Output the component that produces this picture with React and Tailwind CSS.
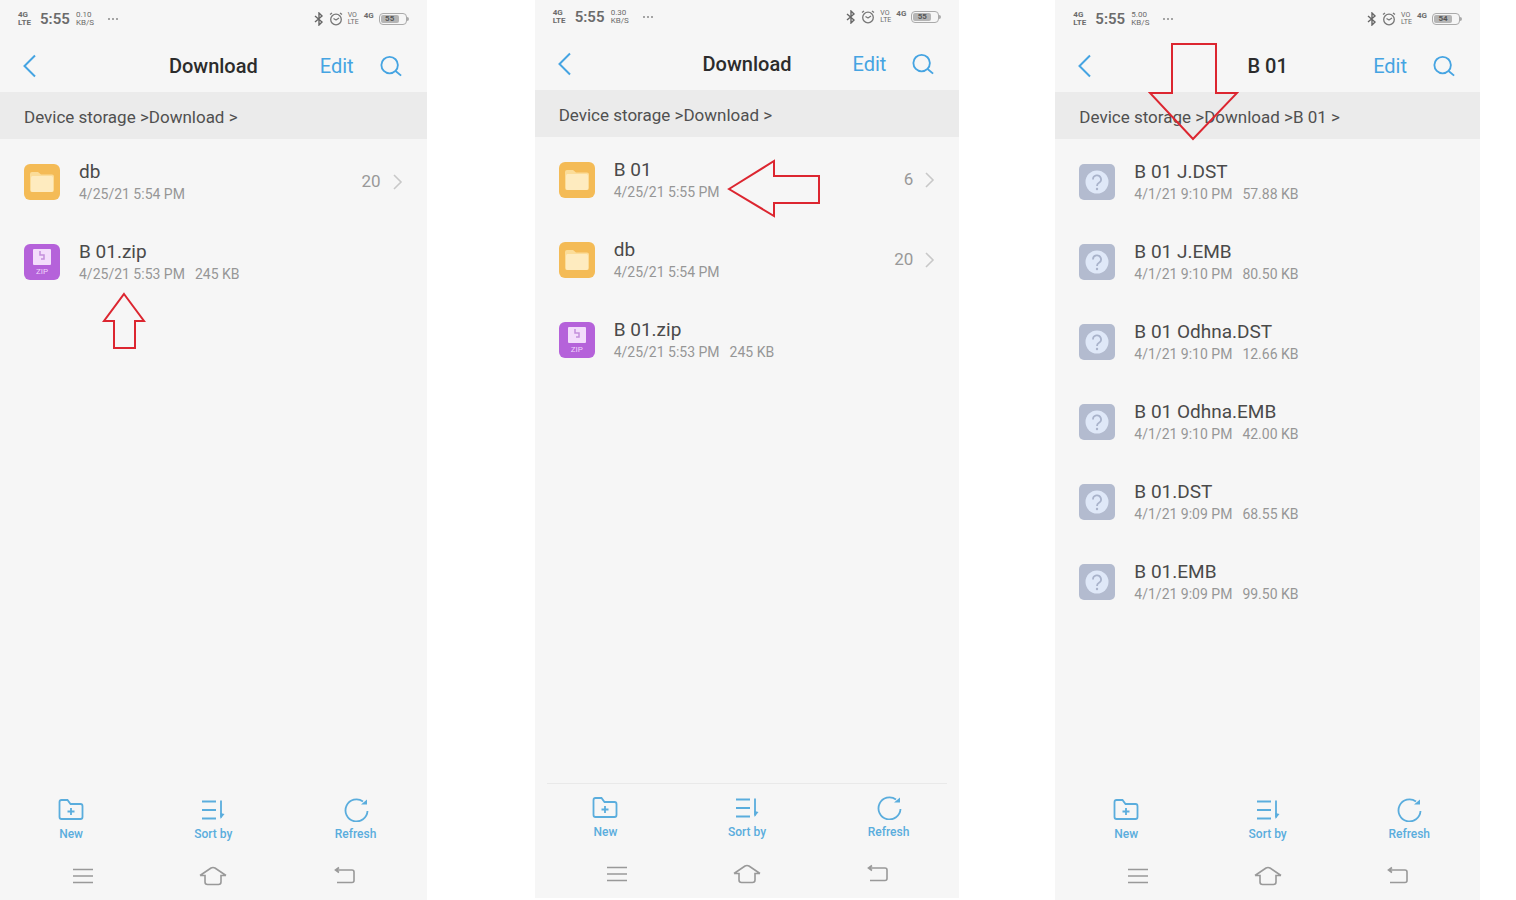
const zipRow = {
  name: "B 01.zip",
  type: "zip",
  date: "4/25/21 5:53 PM",
  size: "245 KB",
};

const screens = [
  {
    id: "download",
    title: "Download",
    path: ["Device storage", "Download"],
    speed: "0.10",
    battery: "55",
    arrow: "up",
    className: "flex-[427] pt-0.5",
    files: [
      { name: "db", type: "folder", date: "4/25/21 5:54 PM", count: 20 },
      zipRow,
    ],
  },
  {
    id: "extracted",
    title: "Download",
    path: ["Device storage", "Download"],
    speed: "0.30",
    battery: "55",
    arrow: "left",
    divider: true,
    className: "flex-[425] mb-0.5 ml-27",
    files: [
      { name: "B 01", type: "folder", date: "4/25/21 5:55 PM", count: 6 },
      { name: "db", type: "folder", date: "4/25/21 5:54 PM", count: 20 },
      zipRow,
    ],
  },
  {
    id: "b01",
    title: "B 01",
    path: ["Device storage", "Download", "B 01"],
    speed: "5.00",
    battery: "54",
    arrow: "down",
    className: "flex-[425] ml-24 pt-0.5",
    files: [
      { name: "B 01 J.DST", date: "4/1/21 9:10 PM", size: "57.88 KB" },
      { name: "B 01 J.EMB", date: "4/1/21 9:10 PM", size: "80.50 KB" },
      { name: "B 01 Odhna.DST", date: "4/1/21 9:10 PM", size: "12.66 KB" },
      { name: "B 01 Odhna.EMB", date: "4/1/21 9:10 PM", size: "42.00 KB" },
      { name: "B 01.DST", date: "4/1/21 9:09 PM", size: "68.55 KB" },
      { name: "B 01.EMB", date: "4/1/21 9:09 PM", size: "99.50 KB" },
    ],
  },
];

function StatusBar({ speed, battery }) {
  return (
    <div className="flex h-[34px] items-center px-[18px] text-[#6b6b6b]">
      <div className="w-[22px] text-[8px] leading-[8px] font-bold">
        <p>4G</p>
        <p>LTE</p>
      </div>
      <p className="w-9 text-[15px] font-semibold">5:55</p>
      <div className="text-[8px] leading-[8px]">
        <p>{speed}</p>
        <p>KB/S</p>
      </div>
      <svg className="ml-3 h-4 w-3.5" viewBox="0 0 14 16" fill="#8a8a8a">
        <circle cx="3" cy="8" r="1" />
        <circle cx="7" cy="8" r="1" />
        <circle cx="11" cy="8" r="1" />
      </svg>
      <div className="ml-auto flex items-center gap-[5px]">
        <svg
          className="h-3.5 w-2.5"
          viewBox="0 0 10 14"
          fill="none"
          stroke="#666"
          strokeWidth="1.4"
        >
          <path d="M1 4l7 6-3 3V1l3 3-7 6" />
        </svg>
        <svg
          className="h-3.5 w-3.5"
          viewBox="0 0 14 14"
          fill="none"
          stroke="#777"
          strokeWidth="1.3"
        >
          <circle cx="7" cy="7.5" r="5.3" />
          <path d="M7 8l3-2M7 8L4.5 6.5M1 2.5L3 1M13 2.5L11 1" />
        </svg>
        <div className="text-[7px] leading-[7px]">
          <p>VO</p>
          <p>LTE</p>
        </div>
        <p className="self-start text-[8px] leading-[8px] font-bold">4G</p>
        <div className="flex items-center">
          <div className="flex h-3 w-7 items-center rounded border border-[#aaa] p-px">
            <span className="h-full w-[18px] rounded-xs bg-[#b5b5b5] text-center text-[8px] leading-[8px] font-bold text-[#555]">
              {battery}
            </span>
          </div>
          <div className="h-1 w-0.5 rounded-r bg-[#aaa]" />
        </div>
      </div>
    </div>
  );
}

function Header({ title }) {
  return (
    <header className="grid h-14 grid-cols-[1fr_auto_1fr] items-center pt-1">
      <button aria-label="Back" className="ml-[22px] w-4">
        <svg
          className="h-6 w-4"
          viewBox="0 0 16 24"
          fill="none"
          stroke="#45a4e2"
          strokeWidth="2"
        >
          <path d="M13 1.5L2.500 12 13 22.500" />
        </svg>
      </button>
      <h1 className="text-xl font-medium text-[#2c2c2c]">{title}</h1>
      <div className="flex items-center justify-end gap-[26px] pr-[25px] text-[#45a4e2]">
        <button className="text-xl">Edit</button>
        <button aria-label="Search">
          <svg
            className="h-[22px] w-[22px]"
            viewBox="0 0 24 24"
            fill="none"
            stroke="currentColor"
            strokeWidth="2"
          >
            <circle cx="10.5" cy="11" r="9" />
            <path d="M17 17.5l6 5" />
          </svg>
        </button>
      </div>
    </header>
  );
}

function FileIcon({ type }) {
  if (type === "folder") {
    return (
      <svg className="h-9 w-9 shrink-0" viewBox="0 0 36 36">
        <rect width="36" height="36" rx="6" fill="#f4bb56" />
        <path
          d="M6 10q0-2 2-2h6l3 2.500h11q2 0 2 2V26q0 2-2 2H8q-2 0-2-2z"
          fill="#fbdc98"
        />
        <rect x="7" y="12" width="22" height="16" rx="1.5" fill="#feebbf" />
      </svg>
    );
  }

  if (type === "zip") {
    return (
      <div className="flex h-9 w-9 shrink-0 flex-col items-center rounded-md bg-[#b562da] pt-[5px]">
        <svg className="h-4 w-[18px]" viewBox="0 0 18 16" fill="none">
          <rect width="18" height="16" rx="1" fill="#f3ddfb" />
          <path
            d="M7 2v4h4v4H8"
            stroke="#c48fdc"
            strokeWidth="1.5"
          />
        </svg>
        <span className="mt-0.5 text-[8px] leading-[10px] text-[#f0d4fa]">
          ZIP
        </span>
      </div>
    );
  }

  return (
    <svg className="h-9 w-9 shrink-0" viewBox="0 0 36 36" fill="none">
      <rect width="36" height="36" rx="5" fill="#b3bbcf" />
      <circle cx="18" cy="18" r="11.5" fill="#dfe8f8" />
      <path
        d="M14 15.500a4 4 0 1 1 6 3.300c-1.500.9-2 1.500-2 3.200"
        stroke="#a9b3cb"
        strokeWidth="1.8"
      />
      <circle cx="18" cy="25" r="1.2" fill="#a9b3cb" />
    </svg>
  );
}

function FileRow({ file }) {
  return (
    <li>
      <button className="flex h-20 w-full items-center px-6 text-left">
        <FileIcon type={file.type} />
        <div className="ml-[19px] flex-1">
          <p className="text-[19px] leading-6 text-[#4a4a4a]">{file.name}</p>
          <p className="flex gap-2.5 text-sm leading-5 text-[#969696]">
            <span>{file.date}</span>
            {file.size && <span>{file.size}</span>}
          </p>
        </div>
        {file.count && (
          <div className="flex items-center gap-2.5 text-[#999]">
            <span className="text-[17px]">{file.count}</span>
            <svg
              className="h-4 w-3"
              viewBox="0 0 12 16"
              fill="none"
              stroke="#c8c8c8"
              strokeWidth="1.6"
            >
              <path d="M3 1l7 7-7 7" />
            </svg>
          </div>
        )}
      </button>
    </li>
  );
}

function Toolbar() {
  const buttonClass = "flex flex-col items-center gap-1";
  const iconClass = "h-6 w-7";

  return (
    <div className="grid grid-cols-3 text-xs leading-4 font-medium text-[#5aaddd]">
      <button className={buttonClass}>
        <svg
          className={iconClass}
          viewBox="0 0 28 24"
          fill="none"
          stroke="currentColor"
          strokeWidth="1.8"
        >
          <path d="M2.500 4q0-2 2-2h6l3 4h10q2 0 2 2v11q0 2-2 2h-19q-2 0-2-2z" />
          <path d="M14 10v7M10.500 13.500h7" />
        </svg>
        New
      </button>
      <button className={buttonClass}>
        <svg
          className={iconClass}
          viewBox="0 0 28 24"
          fill="none"
          stroke="currentColor"
          strokeWidth="1.8"
        >
          <path d="M3 3.500h14M3 12h14M3 20.500h14M22 2.500v17" />
          <path d="M21.500 21v-6l4 1z" fill="currentColor" stroke="none" />
        </svg>
        Sort by
      </button>
      <button className={buttonClass}>
        <svg
          className={iconClass}
          viewBox="0 0 28 24"
          fill="none"
          stroke="currentColor"
          strokeWidth="1.8"
        >
          <path d="M25.500 13A11 11 0 1 1 21 3.500" />
          <path d="M19 6.500h6v-5z" fill="currentColor" stroke="none" />
        </svg>
        Refresh
      </button>
    </div>
  );
}

function NavBar() {
  return (
    <nav className="grid h-12 grid-cols-3 place-items-center px-[18px] text-[#999]">
      <button aria-label="Recent apps">
        <svg
          className="h-5 w-7"
          viewBox="0 0 28 20"
          fill="none"
          stroke="currentColor"
          strokeWidth="1.6"
        >
          <path d="M4 3.500h20M4 10h20M4 16.500h20" />
        </svg>
      </button>
      <button aria-label="Home">
        <svg
          className="h-5 w-7"
          viewBox="0 0 28 20"
          fill="none"
          stroke="currentColor"
          strokeWidth="1.6"
        >
          <path d="M1 9.500L12 2q2-1 4 0L27 9.500M1 9.500h5V16q0 2.500 2.500 2.500h11q2.500 0 2.500-2.500V9.500h5" />
        </svg>
      </button>
      <button aria-label="Navigate back">
        <svg
          className="h-5 w-7"
          viewBox="0 0 28 20"
          fill="none"
          stroke="currentColor"
          strokeWidth="1.6"
        >
          <path d="M9 1.500L5.500 4 9 6.500M5.500 4H22q2 0 2 2v8.500q0 2-2 2H7" />
        </svg>
      </button>
    </nav>
  );
}

// red outlines drawn over each screen
function Arrow({ direction }) {
  if (direction === "up") {
    return (
      <svg
        className="absolute top-[292px] left-[102px] h-[59px] w-[45px]"
        viewBox="0 0 45 59"
        fill="none"
        stroke="#dc2630"
        strokeWidth="2"
      >
        <path d="M22 2L42 29H33V56H12V29H2z" />
      </svg>
    );
  }

  if (direction === "left") {
    return (
      <svg
        className="absolute top-[159px] left-[192px] h-[60px] w-[95px]"
        viewBox="0 0 95 60"
        fill="none"
        stroke="#dc2630"
        strokeWidth="2"
      >
        <path d="M2 30L47 2V17H92V44H47V57z" />
      </svg>
    );
  }

  return (
    <svg
      className="absolute top-[41px] left-[93px] h-[100px] w-[91px]"
      viewBox="0 0 91 100"
      fill="none"
      stroke="#dc2630"
      strokeWidth="2"
    >
      <path d="M24 3H68V52H89L45 98 2 52H24z" />
    </svg>
  );
}

function Phone({ screen }) {
  return (
    <section
      className={`relative flex min-w-0 flex-col bg-[#f6f6f6] ${screen.className}`}
    >
      <StatusBar speed={screen.speed} battery={screen.battery} />
      <Header title={screen.title} />
      <nav className="flex h-[47px] items-center bg-[#ebebeb] px-6 pt-1 text-[17px] text-[#505050]">
        <p>
          {screen.path.map((part) => (
            <span key={part}>
              <a href="#">{part}</a>
              {" >"}
            </span>
          ))}
        </p>
      </nav>
      <ul className="flex-1 pt-[3px]">
        {screen.files.map((file) => (
          <FileRow key={file.name} file={file} />
        ))}
      </ul>
      <div
        className={`mx-3 mb-3 border-t ${screen.divider ? "border-[#e9e9e9]" : "border-transparent"}`}
      />
      <Toolbar />
      <div className="h-2.5" />
      <NavBar />
      <Arrow direction={screen.arrow} />
    </section>
  );
}

function App() {
  return (
    <main className="flex min-h-screen bg-white pr-9 font-[Roboto,sans-serif]">
      {screens.map((screen) => (
        <Phone key={screen.id} screen={screen} />
      ))}
    </main>
  );
}

export default App;
